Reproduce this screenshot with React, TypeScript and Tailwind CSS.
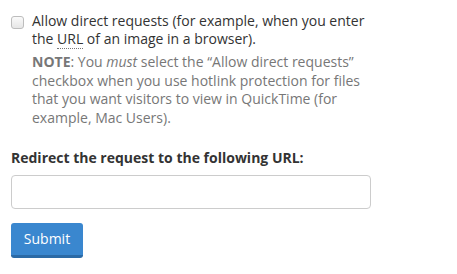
export default function App() {
  return (
    <div className="w-[457px] h-[274px] bg-white font-['Open_Sans',sans-serif] text-[#333] pl-[11px] pt-[12px]">
      <div className="w-[360px]">
        <div className="flex items-start">
          <span className="mt-[4px] w-[13px] h-[13px] shrink-0 rounded-[3px] border border-[#bdbdbd] bg-gradient-to-b from-[#fafafa] to-[#e6e6e6]" />
          <div className="ml-[8px]">
            <p className="text-[14px] leading-[18px]">
              Allow direct requests (for example, when you enter the{" "}
              <abbr className="no-underline border-b border-dotted border-[#777]">URL</abbr> of an image in a browser).
            </p>
            <p className="mt-[5px] text-[14px] leading-[18.5px] text-[#777]">
              <b className="font-bold">NOTE</b>: You <i>must</i> select the “Allow direct requests” checkbox when you use
              hotlink protection for files that you want visitors to view in QuickTime (for example, Mac Users).
            </p>
          </div>
        </div>
        <label className="block mt-[22px] text-[14px] leading-[18px] font-bold">
          Redirect the request to the following URL:
        </label>
        <input
          type="text"
          className="block mt-[8px] w-[360px] h-[34px] rounded-[4px] border border-[#ccc] px-3 outline-none"
        />
        <button className="mt-[14px] w-[72px] h-[35px] rounded-[3px] bg-[#3a87cf] border-b-[3px] border-[#2b6aa6] text-white text-[14px] leading-none">
          Submit
        </button>
      </div>
    </div>
  );
}
